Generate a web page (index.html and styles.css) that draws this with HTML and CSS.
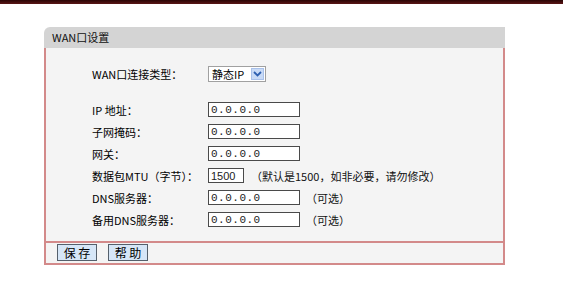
FILE: index.html
```html
<!DOCTYPE html>
<html lang="zh-CN">
<head>
    <meta charset="UTF-8">
    <title>WAN口设置</title>
    <link rel="stylesheet" href="styles.css">
</head>
<body>
    <div class="top-bar"></div>

    <div class="panel">
        <div class="panel-title">WAN口设置</div>

        <div class="panel-body">
            <div class="row row-type">
                <label>WAN口连接类型：</label>
                <div class="select-box">
                    <span class="select-text">静态IP</span>
                    <span class="select-arrow">
                        <svg width="9" height="6" viewBox="0 0 9 6"><path d="M1 1 L4.5 4.5 L8 1" fill="none" stroke="#2d5fb0" stroke-width="1.8"/></svg>
                    </span>
                </div>
            </div>

            <div class="row">
                <label>IP 地址：</label>
                <input class="field" type="text" value="0.0.0.0">
            </div>
            <div class="row">
                <label>子网掩码：</label>
                <input class="field" type="text" value="0.0.0.0">
            </div>
            <div class="row">
                <label>网关：</label>
                <input class="field" type="text" value="0.0.0.0">
            </div>
            <div class="row">
                <label>数据包MTU（字节）：</label>
                <input class="field short" type="text" value="1500">
                <span class="note">（默认是1500，如非必要，请勿修改）</span>
            </div>
            <div class="row">
                <label>DNS服务器：</label>
                <input class="field" type="text" value="0.0.0.0">
                <span class="note note-dns">（可选）</span>
            </div>
            <div class="row">
                <label>备用DNS服务器：</label>
                <input class="field" type="text" value="0.0.0.0">
                <span class="note note-dns">（可选）</span>
            </div>
        </div>

        <div class="panel-foot">
            <button>保 存</button>
            <button>帮 助</button>
        </div>
    </div>
</body>
</html>
```

FILE: styles.css
```css
* {
    margin: 0;
    padding: 0;
    box-sizing: border-box;
}
body {
    background: #fff;
    font-family: "Noto Sans CJK SC", "DejaVu Sans", sans-serif;
    font-size: 12px;
    color: #000;
}
.top-bar {
    height: 4px;
    background: linear-gradient(#2a0505, #5a1616);
}
.panel {
    width: 461px;
    margin: 23px 0 0 44px;
}
.panel-title {
    height: 21px;
    line-height: 20px;
    padding-left: 8px;
    background: #d4d4d4;
    border-top-left-radius: 6px;
    font-size: 11px;
    color: #111;
}
.panel-body {
    display: flex;
    flex-direction: column;
    gap: 7px;
    background: #f4f4f4;
    border-left: 2px solid #d38a8a;
    border-right: 2px solid #d38a8a;
    padding: 18px 0 14px 46px;
}
.row {
    display: flex;
    align-items: center;
    height: 15px;
}
.row-type {
    height: 16px;
    margin-bottom: 13px;
}
.row label {
    width: 116px;
    font-size: 11px;
}
.select-box {
    display: flex;
    align-items: center;
    width: 58px;
    height: 16px;
    background: #fff;
    border: 1px solid #a0a0a0;
}
.select-text {
    flex: 1;
    padding-left: 3px;
    font-size: 11px;
}
.select-arrow {
    display: flex;
    align-items: center;
    justify-content: center;
    width: 13px;
    height: 12px;
    margin-right: 1px;
    background: #c8daf6;
    border: 1px solid #a9c1ea;
}
.field {
    width: 92px;
    height: 15px;
    border: 1px solid #4a4a4a;
    background: #fff;
    padding-left: 2px;
    font-family: "Liberation Mono", monospace;
    font-size: 11px;
    letter-spacing: 0.5px;
    color: #222;
}
.field.short {
    width: 36px;
    font-family: "Liberation Sans", Arial, sans-serif;
    letter-spacing: 0;
}
.note {
    margin-left: 7px;
    font-size: 11px;
    color: #111;
}
.note-dns {
    margin-left: 6px;
}
.panel-foot {
    display: flex;
    gap: 11px;
    height: 24px;
    padding: 1px 0 0 11px;
    background: #f4f4f4;
    border: 2px solid #d38a8a;
}
.panel-foot button {
    width: 40px;
    height: 17px;
    background: #d6e6f7;
    border: 1px solid #55606c;
    font-family: "Noto Sans CJK SC", sans-serif;
    font-size: 12px;
    line-height: 14px;
    color: #000;
}
```
